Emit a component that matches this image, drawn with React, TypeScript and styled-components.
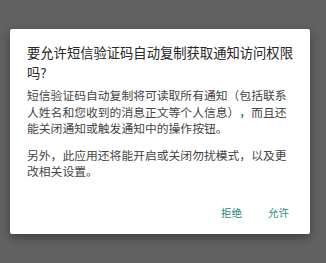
import React from 'react'
import styled, { createGlobalStyle } from 'styled-components'

const GlobalStyle = createGlobalStyle`
  html, body {
    margin: 0;
    padding: 0;
    background: #616161;
  }
  body {
    font-family: "Noto Sans CJK SC", "Noto Sans", sans-serif;
    text-spacing-trim: space-all;
  }
`

const Screen = styled.div`
  width: 326px;
  height: 263px;
  background: #616161;
  padding: 29px 0 0 10px;
  box-sizing: border-box;
`

const Dialog = styled.div`
  width: 300px;
  height: 205px;
  box-sizing: border-box;
  background: #ffffff;
  border-radius: 2px;
  box-shadow: 0 4px 10px rgba(0, 0, 0, 0.35);
  padding: 14px 15px 8px 17px;
  display: flex;
  flex-direction: column;
`

const Title = styled.h2`
  margin: 0;
  font-size: 13.3px;
  line-height: 19.5px;
  font-weight: 400;
  color: #262626;
`

const Body = styled.div`
  margin-top: 5px;
  display: flex;
  flex-direction: column;
  gap: 10px;
`

const Paragraph = styled.p`
  margin: 0;
  font-size: 11.8px;
  line-height: 16.5px;
  color: #444444;
  text-spacing-trim: space-all;
`

const Actions = styled.div`
  margin-top: auto;
  display: flex;
  justify-content: flex-end;
  margin-right: -7px;
`

const ActionButton = styled.button`
  height: 28px;
  padding: 0 13px;
  border: none;
  background: transparent;
  font-family: inherit;
  font-size: 10.5px;
  color: #1f8a7d;
  cursor: pointer;
`

const App = () => {
  return (
    <>
      <GlobalStyle />
      <Screen>
        <Dialog>
          <Title>要允许短信验证码自动复制获取通知访问权限吗?</Title>
          <Body>
            <Paragraph>
              短信验证码自动复制将可读取所有通知（包括联系人姓名和您收到的消息正文等个人信息），而且还能关闭通知或触发通知中的操作按钮。
            </Paragraph>
            <Paragraph>另外，此应用还将能开启或关闭勿扰模式，以及更改相关设置。</Paragraph>
          </Body>
          <Actions>
            <ActionButton>拒绝</ActionButton>
            <ActionButton>允许</ActionButton>
          </Actions>
        </Dialog>
      </Screen>
    </>
  )
}

export default App
